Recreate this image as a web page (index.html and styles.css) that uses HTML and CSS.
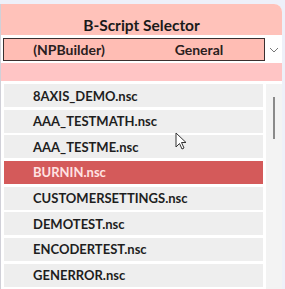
FILE: index.html
```html
<!DOCTYPE html>
<html>
<head>
<meta charset="utf-8">
<link rel="stylesheet" href="styles.css">
</head>
<body>
<div class="panel">
  <div class="header">B-Script Selector</div>
  <div class="combo-row">
    <div class="combo">
      <span class="col">(NPBuilder)</span>
      <span class="col">General</span>
    </div>
    <div class="chev">
      <svg width="10" height="6" viewBox="0 0 10 6"><path d="M1 1 L5 5 L9 1" fill="none" stroke="#777" stroke-width="1"/></svg>
    </div>
  </div>
  <div class="pinkbar"></div>
  <div class="listwrap">
    <div class="list">
      <div class="item">8AXIS_DEMO.nsc</div>
      <div class="item">AAA_TESTMATH.nsc</div>
      <div class="item">AAA_TESTME.nsc</div>
      <div class="item sel">BURNIN.nsc</div>
      <div class="item">CUSTOMERSETTINGS.nsc</div>
      <div class="item">DEMOTEST.nsc</div>
      <div class="item">ENCODERTEST.nsc</div>
      <div class="item">GENERROR.nsc</div>
    </div>
    <div class="scroll"><div class="thumb"></div></div>
  </div>
  <svg class="cursor" width="13" height="19" viewBox="0 0 13 19"><path d="M1 1 L1 15 L4.5 11.5 L7 17 L9 16 L6.5 10.5 L11 10.5 Z" fill="#fff" stroke="#333" stroke-width="1" stroke-linejoin="round"/></svg>
</div>
</body>
</html>
```
FILE: styles.css
```css
html, body { margin: 0; padding: 0; }
body {
  background: #eef0f9;
  font-family: "Lato", "Open Sans", sans-serif;
  width: 285px;
  height: 289px;
  overflow: hidden;
}
.panel {
  position: relative;
  margin-top: 4px;
  width: 281px;
  height: 285px;
  background: #ffffff;
  border-left: 1px solid #d0d0d8;
  border-top-right-radius: 8px;
  overflow: hidden;
}
.header {
  height: 31px;
  background: #ffc2ba;
  font-weight: 700;
  font-size: 15.5px;
  color: #1a1a1a;
  display: flex;
  align-items: center;
  justify-content: center;
  padding-top: 10px;
  box-sizing: border-box;
}
.combo-row {
  display: flex;
  margin-top: 3px;
  height: 23px;
}
.combo {
  margin-left: 2px;
  width: 262px;
  box-sizing: border-box;
  border: 1px solid #3a3030;
  background: #ffbdb4;
  display: grid;
  grid-template-columns: 1fr 1fr;
  align-items: center;
  font-size: 14px;
  font-weight: 700;
  color: #2a2020;
}
.col { text-align: center; }
.chev {
  flex: 1;
  display: flex;
  align-items: center;
  justify-content: center;
}
.pinkbar {
  margin-top: 2px;
  height: 18px;
  background: #ffc5c5;
}
.listwrap {
  display: flex;
  padding-top: 3px;
}
.list {
  margin-left: 3px;
  width: 259px;
  display: flex;
  flex-direction: column;
  gap: 2.67px;
}
.item {
  height: 23px;
  background: #eeeeee;
  display: flex;
  align-items: center;
  padding-left: 29px;
  font-size: 13px;
  font-weight: 700;
  color: #1e1e1e;
}
.item.sel {
  background: #d45a5a;
  color: #ffe2e2;
}
.scroll {
  margin-left: 3px;
  width: 16px;
  background: #f3f3f3;
  position: relative;
  height: 210px;
}
.thumb {
  position: absolute;
  left: 7px;
  top: 13px;
  width: 2px;
  height: 42px;
  background: #8a8a8a;
}
.cursor {
  position: absolute;
  left: 174px;
  top: 128px;
}
```
